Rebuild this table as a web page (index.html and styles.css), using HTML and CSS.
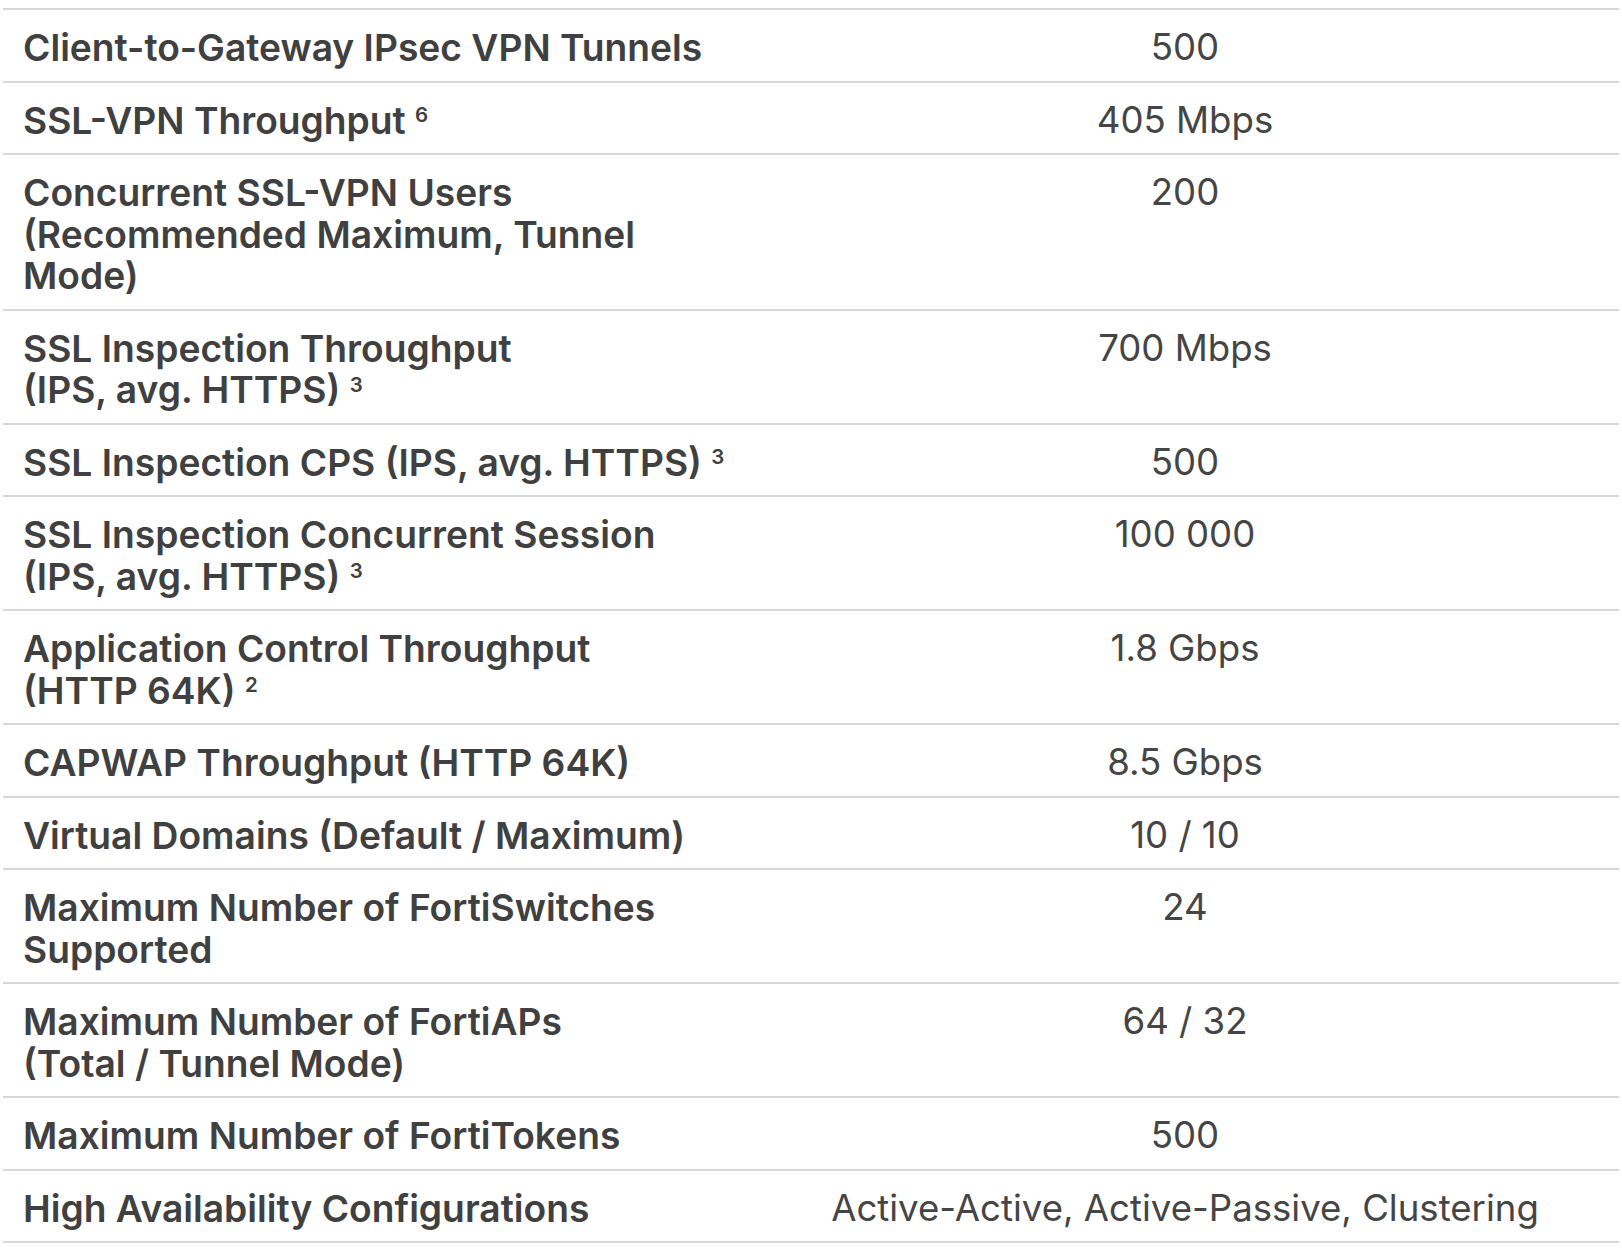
FILE: index.html
```html
<!DOCTYPE html>
<html lang="en">
<head>
<meta charset="utf-8">
<title>Specifications</title>
<link rel="stylesheet" href="styles.css">
</head>
<body>
<div class="spec-table">
  <div class="row"><div class="label">Client-to-Gateway IPsec VPN Tunnels</div><div class="value">500</div></div>
  <div class="row"><div class="label">SSL-VPN Throughput <sup>6</sup></div><div class="value">405 Mbps</div></div>
  <div class="row"><div class="label">Concurrent SSL-VPN Users<br>(Recommended Maximum, Tunnel<br>Mode)</div><div class="value">200</div></div>
  <div class="row"><div class="label">SSL Inspection Throughput<br>(IPS, avg. HTTPS) <sup>3</sup></div><div class="value">700 Mbps</div></div>
  <div class="row"><div class="label">SSL Inspection CPS (IPS, avg. HTTPS) <sup>3</sup></div><div class="value">500</div></div>
  <div class="row"><div class="label">SSL Inspection Concurrent Session<br>(IPS, avg. HTTPS) <sup>3</sup></div><div class="value">100 000</div></div>
  <div class="row"><div class="label">Application Control Throughput<br>(HTTP 64K) <sup>2</sup></div><div class="value">1.8 Gbps</div></div>
  <div class="row"><div class="label">CAPWAP Throughput (HTTP 64K)</div><div class="value">8.5 Gbps</div></div>
  <div class="row"><div class="label">Virtual Domains (Default / Maximum)</div><div class="value">10 / 10</div></div>
  <div class="row"><div class="label">Maximum Number of FortiSwitches<br>Supported</div><div class="value">24</div></div>
  <div class="row"><div class="label">Maximum Number of FortiAPs<br>(Total / Tunnel Mode)</div><div class="value">64 / 32</div></div>
  <div class="row"><div class="label">Maximum Number of FortiTokens</div><div class="value">500</div></div>
  <div class="row"><div class="label">High Availability Configurations</div><div class="value">Active-Active, Active-Passive, Clustering</div></div>
</div>
</body>
</html>
```
FILE: styles.css
```css
html, body {
  background: #ffffff;
}
body {
  margin: 8px 3px 0 3px;
  font-family: Inter, "Noto Sans", sans-serif;
  color: #454545;
}
.spec-table {
  border-top: 2px solid #d7d7d7;
}
.row {
  display: grid;
  grid-template-columns: 748px 1fr;
  border-bottom: 2px solid #d7d7d7;
}
.label {
  padding: 17px 20px 12px 20px;
  font-size: 37.2px;
  line-height: 41.5px;
  font-weight: 600;
  color: #404040;
}
.value {
  padding: 17px 20px 12px 20px;
  font-size: 36.6px;
  line-height: 41.5px;
  font-weight: 400;
  text-align: center;
  color: #454545;
}
sup {
  font-size: 0.55em;
  font-weight: 600;
  line-height: 0;
  vertical-align: 0;
  position: relative;
  top: -0.55em;
}
```
